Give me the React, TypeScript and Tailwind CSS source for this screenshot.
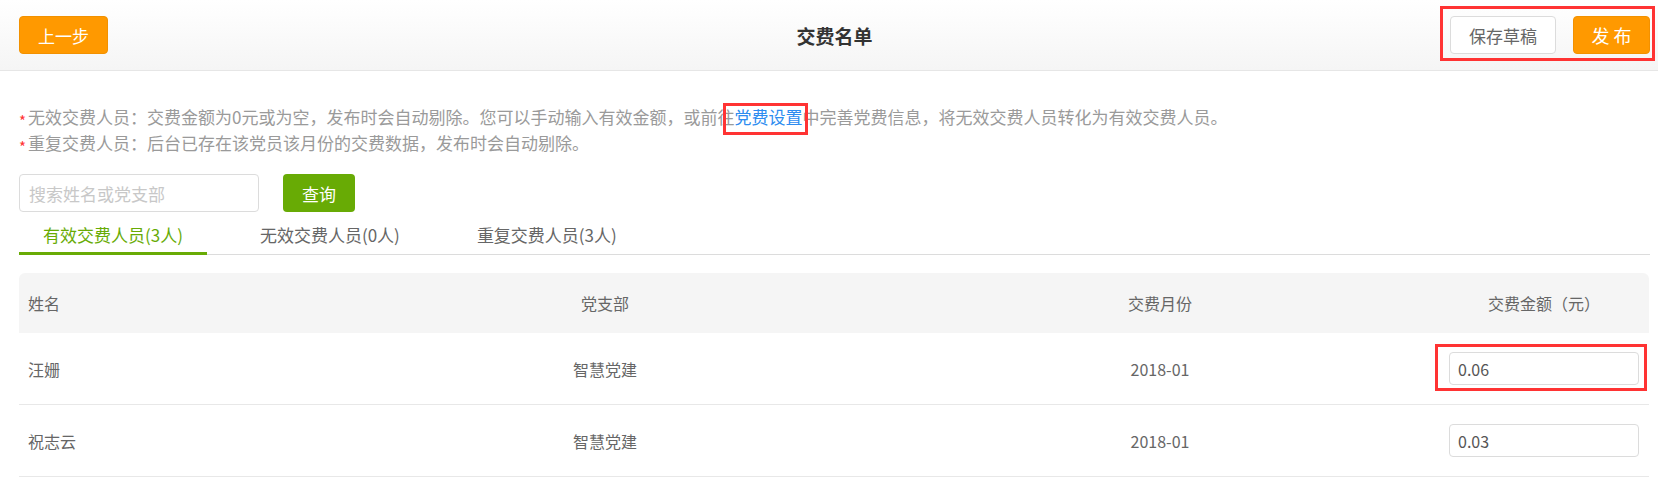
import React from "react";

const rows = [
  { name: "汪姗", branch: "智慧党建", month: "2018-01", amount: "0.06", marked: true },
  { name: "祝志云", branch: "智慧党建", month: "2018-01", amount: "0.03", marked: false },
];

function RedBox({ className }: { className: string }) {
  return <span className={`pointer-events-none absolute border-[3px] border-[#f33] ${className}`} />;
}

function Star() {
  return (
    <span className="inline-block w-[9px] text-[#f33] text-[15px] leading-none relative top-[3px]">*</span>
  );
}

export default function App() {
  return (
    <div className="w-[1658px] h-[488px] overflow-hidden bg-white font-['Noto_Sans_CJK_SC','Noto_Sans',sans-serif]">
      <header className="h-[71px] border-b border-[#e6e6e6] bg-linear-to-b from-white to-[#f5f5f5] grid grid-cols-[1fr_auto_1fr] items-center pl-[19px] pr-[8px]">
        <div>
          <button className="w-[89px] h-[38px] rounded-[4px] bg-[#ff9900] border border-[#f29100] text-white text-[17px] leading-none">
            上一步
          </button>
        </div>
        <h1 className="text-[19px] font-bold text-[#333] leading-none">交费名单</h1>
        <div className="flex justify-end">
          <div className="relative flex gap-[17px]">
            <button className="w-[106px] h-[38px] rounded-[4px] bg-white border border-[#dcdcdc] text-[#666] text-[17px] leading-none">
              保存草稿
            </button>
            <button className="w-[77px] h-[38px] rounded-[4px] bg-[#ff9900] border border-[#f29100] text-white text-[18px] leading-none">
              发 布
            </button>
            <RedBox className="-left-[10px] -right-[5px] -top-[10px] -bottom-[7px]" />
          </div>
        </div>
      </header>

      <div className="mt-[33px] pl-[19px] text-[17px] leading-[26px] text-[#9a9a9a]">
        <p className="h-[26px] whitespace-nowrap">
          <Star />
          无效交费人员：交费金额为0元或为空，发布时会自动剔除。您可以手动输入有效金额，或前往
          <span className="relative inline-block text-[#2d8cf0]">
            党费设置
            <RedBox className="-left-[11px] -right-[6px] -top-[1px] -bottom-[5px]" />
          </span>
          中完善党费信息，将无效交费人员转化为有效交费人员。
        </p>
        <p className="h-[26px] whitespace-nowrap">
          <Star />
          重复交费人员：后台已存在该党员该月份的交费数据，发布时会自动剔除。
        </p>
      </div>

      <div className="mt-[18px] pl-[19px] flex gap-[24px]">
        <input
          className="w-[240px] h-[38px] border border-[#dcdcdc] rounded-[4px] px-[9px] text-[17px] text-[#555] placeholder:text-[#c8c8c8] outline-none"
          placeholder="搜索姓名或党支部"
        />
        <button className="w-[72px] h-[38px] rounded-[4px] bg-[#68ab05] text-white text-[17px] leading-none">
          查询
        </button>
      </div>

      <div className="pl-[19px] pr-[8px]">
        <div className="flex gap-[29px] border-b border-[#dcdcdc]">
          <div className="h-[43px] -mb-px pt-[5px] px-[24px] border-b-[3px] border-[#68ab05] text-[#68ab05] text-[17px] flex items-center">
            有效交费人员(3人)
          </div>
          <div className="h-[43px] -mb-px pt-[5px] px-[24px] border-b-[3px] border-transparent text-[#666] text-[17px] flex items-center">
            无效交费人员(0人)
          </div>
          <div className="h-[43px] -mb-px pt-[5px] px-[24px] border-b-[3px] border-transparent text-[#666] text-[17px] flex items-center">
            重复交费人员(3人)
          </div>
        </div>
      </div>

      <div className="mt-[18px] pl-[19px] pr-[9px] text-[16px] text-[#666]">
        <div className="grid grid-cols-[310px_552px_558px_210px] h-[60px] items-center bg-[#f5f5f5] rounded-t-[6px]">
          <div className="pl-[9px]">姓名</div>
          <div className="text-center">党支部</div>
          <div className="text-center">交费月份</div>
          <div className="text-center">交费金额（元）</div>
        </div>
        {rows.map((r) => (
          <div
            key={r.name}
            className="grid grid-cols-[310px_552px_558px_210px] h-[72px] items-center border-b border-[#e8e8e8]"
          >
            <div className="pl-[9px]">{r.name}</div>
            <div className="text-center">{r.branch}</div>
            <div className="text-center">{r.month}</div>
            <div className="flex justify-end pr-[10px]">
              <div className="relative">
                <input
                  className="block w-[190px] h-[33px] border border-[#dcdcdc] rounded-[4px] px-[8px] text-[16px] text-[#555] outline-none"
                  defaultValue={r.amount}
                />
                {r.marked && <RedBox className="-left-[14px] -right-[8px] -top-[8px] -bottom-[6px]" />}
              </div>
            </div>
          </div>
        ))}
      </div>
    </div>
  );
}
